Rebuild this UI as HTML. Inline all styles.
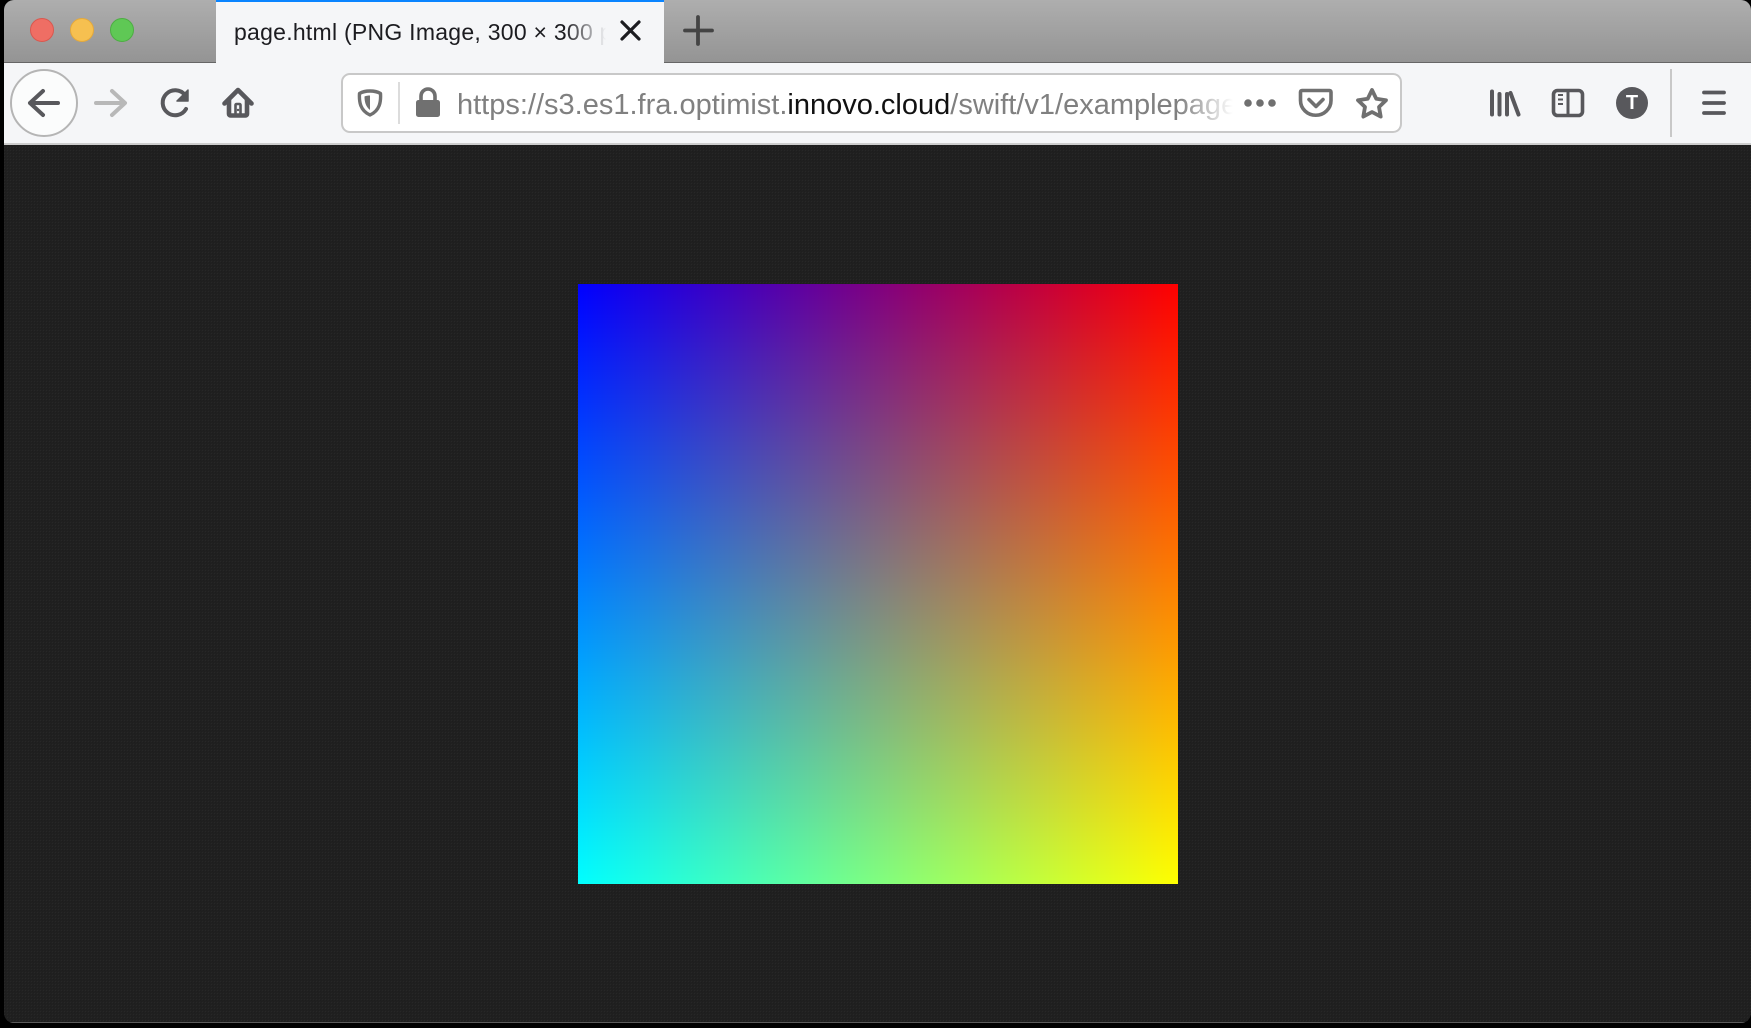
<!DOCTYPE html>
<html><head><meta charset="utf-8"><title>page.html</title>
<style>
html,body{margin:0;padding:0;background:#000;width:1751px;height:1028px;overflow:hidden}
#win{position:absolute;left:4px;top:0;width:1747px;height:1023px;border-radius:10px;overflow:hidden;background:#202020}
.a{position:absolute}
#titlebar{left:0;top:0;width:1747px;height:62px;background:linear-gradient(#aeaeae,#949494);border-bottom:1px solid #666}
#toolbar{left:0;top:63px;width:1747px;height:80px;background:#f5f6f8;border-bottom:2px solid #cdcdcd}
#tab{left:212px;top:0;width:448px;height:63px;background:#f5f6f8;box-sizing:border-box;border-top:2px solid #0a84ff}
#tabtext{position:absolute;left:18px;top:16px;width:376px;height:32px;font:23px/28px "Liberation Sans",sans-serif;letter-spacing:.26px;color:#1c1c20;white-space:nowrap;overflow:hidden;-webkit-mask-image:linear-gradient(to right,#000 88%,transparent 99%);mask-image:linear-gradient(to right,#000 88%,transparent 99%)}
#urlbar{left:337px;top:73px;width:1061px;height:60px;box-sizing:border-box;background:#fff;border:2px solid #c8c8c8;border-radius:9px}
#url{position:absolute;left:453px;top:88px;width:776px;height:36px;font:29px/34px "Liberation Sans",sans-serif;color:#808080;white-space:nowrap;overflow:hidden;-webkit-mask-image:linear-gradient(to right,#000 93%,transparent 100%);mask-image:linear-gradient(to right,#000 93%,transparent 100%)}
#url b{font-weight:normal;color:#111}
#img{left:574px;top:284px;width:600px;height:600px;background:linear-gradient(to bottom,#000,#0f0),linear-gradient(to right,#00f,#f00);background-blend-mode:screen}
#bl{left:0;bottom:0;width:1747px;height:1px;background:#5a5a5a}
#av{left:1612px;top:87px;width:32px;height:32px;line-height:32px;text-align:center;color:#fff;font:bold 20px/32px "Liberation Sans",sans-serif}
svg{position:absolute;left:0;top:0}
</style></head><body>
<div id="win">
<svg class="a" width="1747" height="1023"><defs><pattern id="n" width="3" height="3" patternUnits="userSpaceOnUse"><rect x="0" y="0" width="1" height="1" fill="#272727"/><rect x="1" y="1" width="1" height="1" fill="#1d1d1d"/><rect x="2" y="2" width="1" height="1" fill="#1e1e1e"/></pattern></defs><rect width="1747" height="1023" fill="url(#n)"/></svg>
<div class="a" id="titlebar"></div>
<div class="a" id="toolbar"></div>
<div class="a" id="tab"><div id="tabtext">page.html (PNG Image, 300 × 300 pixels)</div></div>
<div class="a" id="urlbar"></div>
<div id="url">https://s3.es1.fra.optimist.<b>innovo.cloud</b>/swift/v1/examplepage/page.html</div>
<div class="a" id="img"></div>
<div class="a" id="bl"></div>
<svg width="1747" height="150" viewBox="4 0 1747 150" fill="none">
<circle cx="42" cy="30" r="11.5" fill="#ef6e64" stroke="#d9584f"/>
<circle cx="82" cy="30" r="11.5" fill="#f6c050" stroke="#e5a93a"/>
<circle cx="122" cy="30" r="11.5" fill="#5fc855" stroke="#4dae43"/>
<path d="M622 22l17 17M639 22l-17 17" stroke="#1c1c20" stroke-width="3.2" stroke-linecap="round"/>
<path d="M698 17v27M685 30.500h27" stroke="#444" stroke-width="3.800" stroke-linecap="round"/>
<circle cx="44" cy="103" r="33" fill="#fbfcfc" stroke="#b5b5b5" stroke-width="2"/>
<path d="M58 103H30M43 91L30 103L43 115" stroke="#58585c" stroke-width="4" stroke-linecap="round" stroke-linejoin="round"/>
<path d="M96 103h28M112 91l13 12l-13 12" stroke="#b8b8b8" stroke-width="4" stroke-linecap="round" stroke-linejoin="round"/>
<path d="M185 95A12.500 12.500 0 1 0 186 109" stroke="#58585c" stroke-width="4" stroke-linecap="round"/>
<path d="M188 90v11h-11z" fill="#58585c" stroke="#58585c" stroke-width="1.500" stroke-linejoin="round"/>
<path d="M224.500 103.500L238 90L251.500 103.500" stroke="#58585c" stroke-width="4.600" stroke-linecap="round" stroke-linejoin="round"/>
<path d="M229 100v14a1.500 1.500 0 0 0 1.500 1.500H245.500a1.500 1.500 0 0 0 1.500-1.500V100" stroke="#58585c" stroke-width="4.600"/>
<path d="M235.500 116v-11a1 1 0 0 1 1-1h3a1 1 0 0 1 1 1V116" stroke="#58585c" stroke-width="2.600"/>
<circle cx="238" cy="110" r="1.200" fill="#58585c"/>
<path d="M370 91c4 0 8 1 10.500 2.500c.5 8-.5 17-10.500 21.500c-10-4.500-11-13.500-10.500-21.500C362 92 366 91 370 91z" stroke="#707070" stroke-width="3.400" stroke-linejoin="round"/>
<path d="M370 95.500c-2 0-4 .3-5.500 1c0 5 1 10 5.500 13.500z" fill="#707070"/>
<path d="M399 82v42" stroke="#dcdcdc" stroke-width="2"/>
<rect x="416" y="100" width="24" height="17" rx="2.500" fill="#707070"/>
<path d="M421 101v-5a7 7 0 0 1 14 0v5" stroke="#707070" stroke-width="3.600"/>
<circle cx="1248" cy="103" r="3.800" fill="#707070"/><circle cx="1260" cy="103" r="3.800" fill="#707070"/><circle cx="1272" cy="103" r="3.800" fill="#707070"/>
<path d="M1302 90.500h27.500a1.500 1.500 0 0 1 1.500 1.500V100.500a15 14.500 0 0 1-30.500 0V92a1.500 1.500 0 0 1 1.500-1.500z" stroke="#707070" stroke-width="3.600" stroke-linejoin="round"/>
<path d="M1309 99.500l7 7l7-7" stroke="#707070" stroke-width="3.600" stroke-linecap="round" stroke-linejoin="round"/>
<path d="M1372 90l4.300 8.800l9.700 1.400l-7 6.800l1.700 9.600l-8.700-4.600l-8.700 4.600l1.700-9.600l-7-6.800l9.700-1.400z" stroke="#707070" stroke-width="3.800" stroke-linejoin="round"/>
<path d="M1492 91.500v23M1499.500 94v20.500M1507 94v20.500M1510.500 93l8 21.500" stroke="#58585c" stroke-width="4" stroke-linecap="round"/>
<rect x="1553.500" y="90.500" width="29" height="25" rx="4" stroke="#58585c" stroke-width="3.600"/>
<path d="M1568 91v24" stroke="#58585c" stroke-width="3"/>
<path d="M1558 95h5M1558 99.500h5M1558 104h5" stroke="#58585c" stroke-width="2"/>
<circle cx="1632" cy="103" r="16" fill="#58585c"/>
<path d="M1671 69v68" stroke="#c8c8c8" stroke-width="2"/>
<path d="M1704 92.500h20M1704 103h20M1704 113h20" stroke="#58585c" stroke-width="3.800" stroke-linecap="round"/>
</svg>
<div class="a" id="av" style="left:1612px">T</div>
</div>
</body></html>
